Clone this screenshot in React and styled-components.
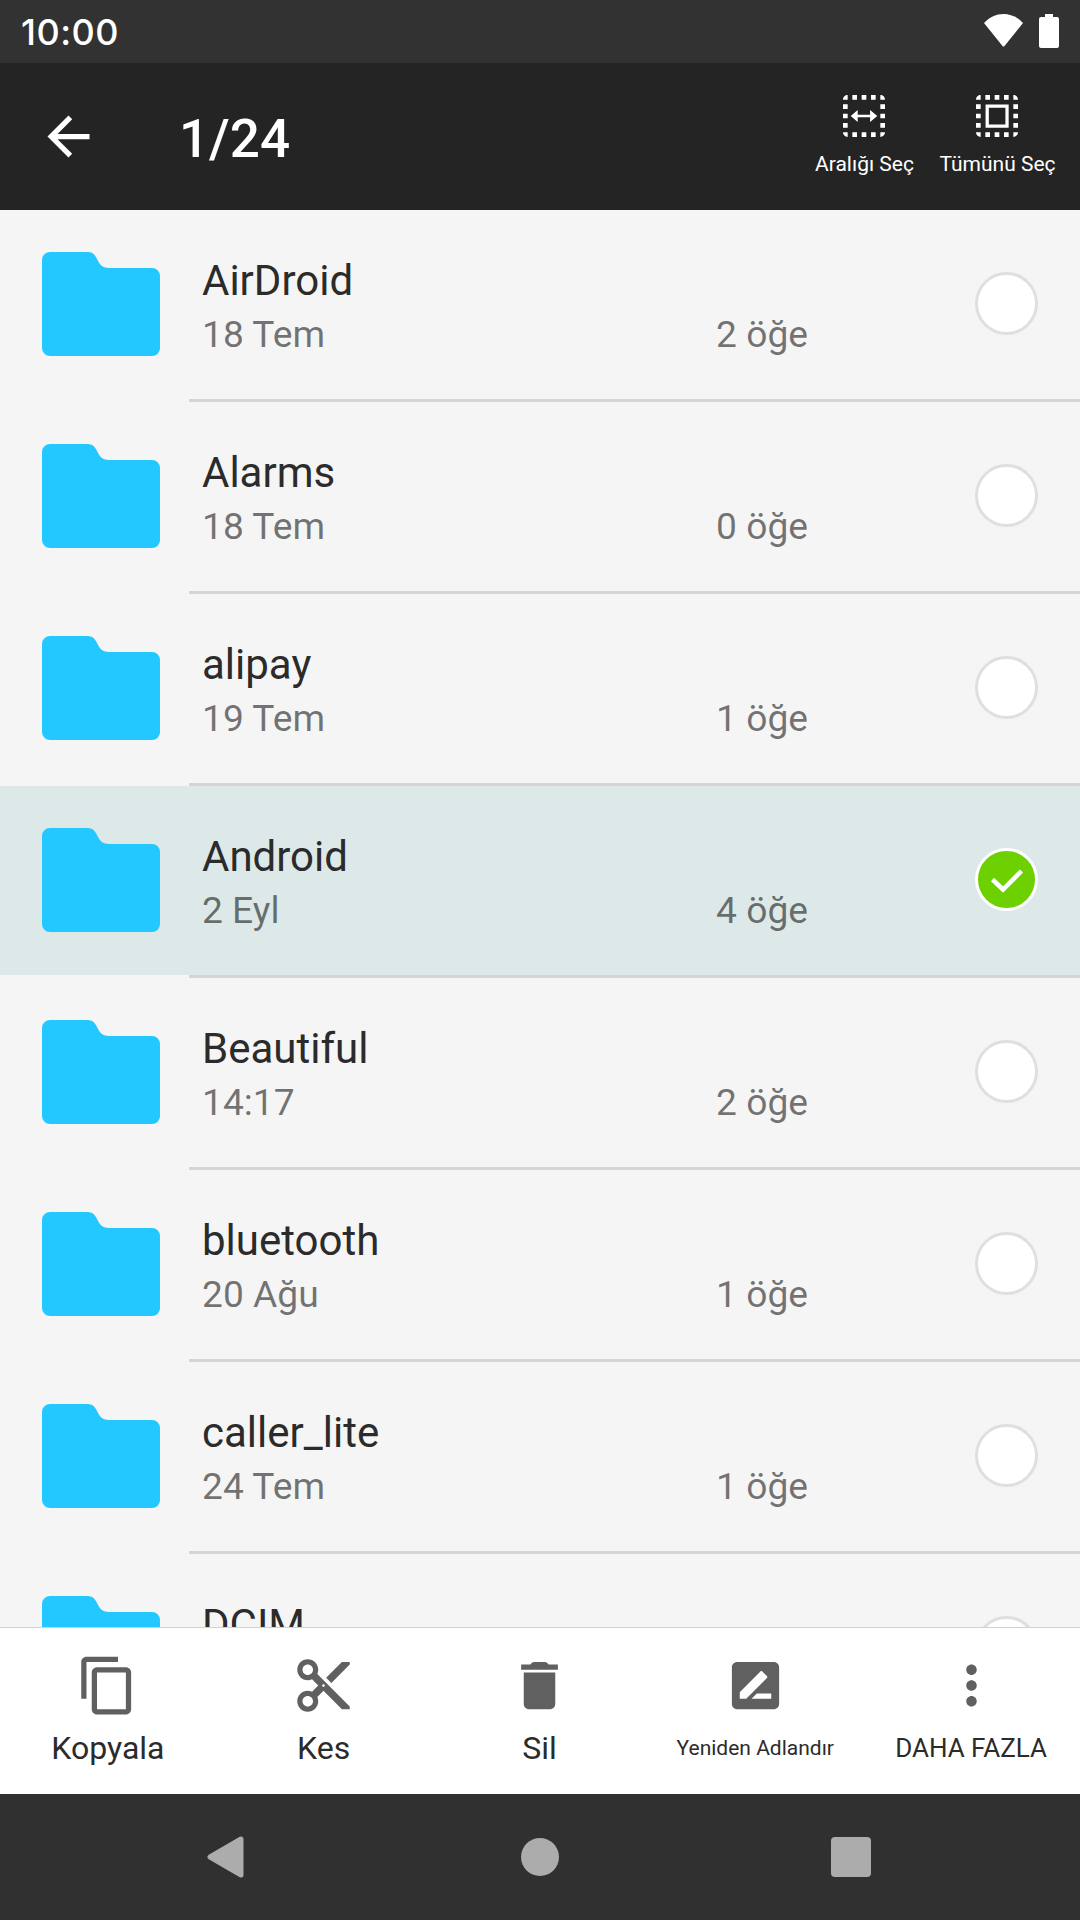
import React from 'react';
import styled, { createGlobalStyle } from 'styled-components';

const folders = [
  { name: 'AirDroid', date: '18 Tem', count: 2 },
  { name: 'Alarms', date: '18 Tem', count: 0 },
  { name: 'alipay', date: '19 Tem', count: 1 },
  { name: 'Android', date: '2 Eyl', count: 4, selected: true },
  { name: 'Beautiful', date: '14:17', count: 2 },
  { name: 'bluetooth', date: '20 Ağu', count: 1 },
  { name: 'caller_lite', date: '24 Tem', count: 1 },
  { name: 'DCIM' },
];

const icons = {
  back: 'M20 11H7.83l5.59-5.59L12 4l-8 8 8 8 1.41-1.41L7.83 13H20v-2z',
  copy: 'M16 1H4c-1.1 0-2 .9-2 2v14h2V3h12V1zm3 4H8c-1.1 0-2 .9-2 2v14c0 1.1.9 2 2 2h11c1.1 0 2-.9 2-2V7c0-1.1-.9-2-2-2zm0 16H8V7h11v14z',
  cut: 'M9.64 7.64c.23-.5.36-1.05.36-1.64 0-2.21-1.79-4-4-4S2 3.79 2 6s1.79 4 4 4c.59 0 1.14-.13 1.64-.36L10 12l-2.36 2.36C7.14 14.13 6.59 14 6 14c-2.21 0-4 1.79-4 4s1.79 4 4 4 4-1.79 4-4c0-.59-.13-1.14-.36-1.64L12 14l7 7h3v-1L9.64 7.64zM6 8c-1.1 0-2-.89-2-2s.9-2 2-2 2 .89 2 2-.9 2-2 2zm0 12c-1.1 0-2-.89-2-2s.9-2 2-2 2 .89 2 2-.9 2-2 2zm6-7.5c-.28 0-.5-.22-.5-.5s.22-.5.5-.5.5.22.5.5-.22.5-.5.5zM19 3l-6 6 2 2 7-7V3z',
  remove: 'M6 19c0 1.1.9 2 2 2h8c1.1 0 2-.9 2-2V7H6v12zM19 4h-3.5c-.5-.7-.9-1-1.5-1h-4c-.6 0-1 .3-1.5 1H5v2h14V4z',
  rename: 'M19 3H5c-1.1 0-2 .9-2 2v14c0 1.1.9 2 2 2h14c1.1 0 2-.9 2-2V5c0-1.1-.9-2-2-2zM6 17v-2.47l7.88-7.88c.2-.2.51-.2.71 0l1.77 1.77c.2.2.2.51 0 .71L8.47 17H6zm12 0h-7.5l2-2H18v2z',
  more: 'M12 8c1.1 0 2-.9 2-2s-.9-2-2-2-2 .9-2 2 .9 2 2 2zm0 2c-1.1 0-2 .9-2 2s.9 2 2 2 2-.9 2-2-.9-2-2-2zm0 6c-1.1 0-2 .9-2 2s.9 2 2 2 2-.9 2-2-.9-2-2-2z',
  dots: 'M3 5h2V3c-1.1 0-2 .9-2 2zm0 8h2v-2H3v2zm4 8h2v-2H7v2zM3 9h2V7H3v2zm10-6h-2v2h2V3zm6 0v2h2c0-1.1-.9-2-2-2zM5 21v-2H3c0 1.1.9 2 2 2zm-2-4h2v-2H3v2zM9 3H7v2h2V3zm2 18h2v-2h-2v2zm8-8h2v-2h-2v2zm0 8c1.1 0 2-.9 2-2h-2v2zm0-12h2V7h-2v2zm0 8h2v-2h-2v2zm-4 4h2v-2h-2v2zm0-16h2V3h-2v2z',
  range: 'M6.3 12l3-2.6v2.1h5.3V9.4l3.1 2.6-3.1 2.6v-2.1H9.3v2.1z',
  all: 'M7.1 7.1h9.9v9.9H7.1zM8.5 8.5v7.1h7.1V8.5z',
};

const actions = [
  { label: 'Kopyala', icon: 'copy', size: 32 },
  { label: 'Kes', icon: 'cut', size: 32 },
  { label: 'Sil', icon: 'remove', size: 32 },
  { label: 'Yeniden Adlandır', icon: 'rename', size: 21 },
  { label: 'DAHA FAZLA', icon: 'more', size: 26 },
];

const Icon = ({ name, size = 63 }) => (
  <svg width={size} height={size} viewBox="0 0 24 24" fill="currentColor">
    <path d={icons[name]} fillRule="evenodd" />
  </svg>
);

const SelectIcon = ({ inner }) => (
  <svg width="56" height="56" viewBox="0 0 24 24" fill="currentColor">
    <path d={icons.dots} />
    <path d={icons[inner]} fillRule="evenodd" />
  </svg>
);

const FolderIcon = () => (
  <svg width="118" height="104" viewBox="0 0 118 104">
    <path
      fill="#22c8ff"
      d="M8 0h38c4 0 6.5 2 8.5 6 3 6.5 5.5 10 12.5 10h43a8 8 0 0 1 8 8v72a8 8 0 0 1-8 8H8a8 8 0 0 1-8-8V8a8 8 0 0 1 8-8z"
    />
  </svg>
);

const FolderRow = ({ folder }) => (
  <Row>
    <RowBody $selected={folder.selected}>
      <FolderIcon />
      <Info>
        <Name>{folder.name}</Name>
        <Meta>
          {folder.date && <span>{folder.date}</span>}
          {folder.count !== undefined && <span>{folder.count} öğe</span>}
        </Meta>
      </Info>
      <Check $checked={folder.selected}>
        {folder.selected && (
          <svg width="57" height="57" viewBox="0 0 57 57" fill="none">
            <path d="M14.5 28.5l10.5 10 18.5-18.5" stroke="#fff" strokeWidth="4.5" />
          </svg>
        )}
      </Check>
    </RowBody>
    <Divider />
  </Row>
);

const App = () => {
  return (
    <Screen>
      <GlobalStyle />
      <StatusBar>
        <Clock>10:00</Clock>
        <StatusIcons>
          <svg width="39" height="33" viewBox="0 0 39 33" fill="#fff">
            <path d="M0 9C11-3 28-3 39 9L20.5 32q-1 1-2 0z" />
          </svg>
          <svg width="20" height="34" viewBox="0 0 20 34" fill="#fff">
            <path d="M6 0h8v3h4a2 2 0 0 1 2 2v27a2 2 0 0 1-2 2H2a2 2 0 0 1-2-2V5a2 2 0 0 1 2-2h4z" />
          </svg>
        </StatusIcons>
      </StatusBar>

      <Header>
        <Icon name="back" />
        <Title>1/24</Title>
        <HeaderAction>
          <SelectIcon inner="range" />
          <HeaderLabel>Aralığı Seç</HeaderLabel>
        </HeaderAction>
        <HeaderAction>
          <SelectIcon inner="all" />
          <HeaderLabel>Tümünü Seç</HeaderLabel>
        </HeaderAction>
      </Header>

      <List>
        {folders.map((folder) => (
          <FolderRow key={folder.name} folder={folder} />
        ))}
      </List>

      <Toolbar>
        {actions.map((action) => (
          <Action key={action.label}>
            <Icon name={action.icon} />
            <ActionLabel $size={action.size}>{action.label}</ActionLabel>
          </Action>
        ))}
      </Toolbar>

      <NavBar>
        <svg width="44" height="42" viewBox="0 0 44 42">
          <path d="M3 21L34 3v36z" fill="#acacac" stroke="#acacac" strokeWidth="5" strokeLinejoin="round" />
        </svg>
        <Home />
        <Recents />
      </NavBar>
    </Screen>
  );
};

const GlobalStyle = createGlobalStyle`
  * {
    box-sizing: border-box;
  }

  body {
    margin: 0;
    background: #303030;
    font-family: Roboto, sans-serif;
  }

  svg {
    display: block;
    flex-shrink: 0;
  }
`;

const Screen = styled.div`
  display: flex;
  flex-direction: column;
  width: 1080px;
  height: 1920px;
  overflow: hidden;
  background: #f5f5f5;
`;

const StatusBar = styled.div`
  display: flex;
  justify-content: space-between;
  flex-shrink: 0;
  height: 63px;
  padding: 0 21px;
  background: #323232;
  color: #fff;
`;

const Clock = styled.span`
  font-family: Inter, sans-serif;
  font-size: 36px;
  font-weight: 500;
  line-height: 65px;
  letter-spacing: 0.5px;
`;

const StatusIcons = styled.div`
  display: flex;
  gap: 16px;
  padding-top: 14px;
`;

const Header = styled.header`
  display: flex;
  align-items: center;
  flex-shrink: 0;
  height: 147px;
  padding: 0 17px 0 37px;
  background: #242424;
  color: #fff;
`;

const Title = styled.h1`
  flex: 1;
  margin: 5px 0 0 79px;
  font-size: 53px;
  font-weight: 500;
  line-height: 62px;
`;

const HeaderAction = styled.div`
  display: flex;
  flex-direction: column;
  align-items: center;
  gap: 8px;
  width: 133px;
  margin-bottom: 10px;
`;

const HeaderLabel = styled.span`
  padding-left: 2px;
  font-size: 21px;
  line-height: 24px;
  white-space: nowrap;
`;

const List = styled.main`
  flex: 1;
  min-height: 0;
  overflow: hidden;
`;

const Row = styled.div`
  height: 192px;
`;

const RowBody = styled.div`
  display: flex;
  align-items: center;
  height: 189px;
  padding: 0 42px 2px;
  background: ${props => props.$selected ? '#dce9e8' : 'transparent'};
`;

const Info = styled.div`
  width: 606px;
  margin: 8px 167px 0 42px;
`;

const Name = styled.div`
  font-size: 42px;
  line-height: 50px;
  color: #2b2b2b;
`;

const Meta = styled.div`
  display: flex;
  justify-content: space-between;
  height: 49px;
  margin-top: 4px;
  font-size: 37.2px;
  line-height: 48px;
  color: rgba(0, 0, 0, 0.54);
`;

const Check = styled.div`
  width: 63px;
  height: 63px;
  flex-shrink: 0;
  border: 3px solid ${props => props.$checked ? '#fff' : '#dfdfdf'};
  border-radius: 50%;
  background: ${props => props.$checked ? '#6dd000' : '#fff'};
`;

const Divider = styled.div`
  height: 3px;
  margin-left: 189px;
  background: #d5d5d5;
`;

const Toolbar = styled.footer`
  display: grid;
  grid-template-columns: repeat(5, 1fr);
  flex-shrink: 0;
  height: 167px;
  padding-right: 1px;
  border-top: 1px solid #d2d2d2;
  background: #fff;
`;

const Action = styled.div`
  display: flex;
  flex-direction: column;
  align-items: center;
  padding-top: 26px;
  color: #606060;
`;

const ActionLabel = styled.span`
  margin-top: 11px;
  font-size: ${props => props.$size}px;
  line-height: 40px;
  white-space: nowrap;
  color: #2b2b2b;
`;

const NavBar = styled.nav`
  display: grid;
  grid-template-columns: repeat(3, 311px);
  justify-content: center;
  justify-items: center;
  align-items: center;
  flex-shrink: 0;
  height: 126px;
  background: #303030;
`;

const Home = styled.div`
  width: 38px;
  height: 38px;
  border-radius: 50%;
  background: #acacac;
`;

const Recents = styled.div`
  width: 40px;
  height: 40px;
  border-radius: 4px;
  background: #acacac;
`;

export default App;
